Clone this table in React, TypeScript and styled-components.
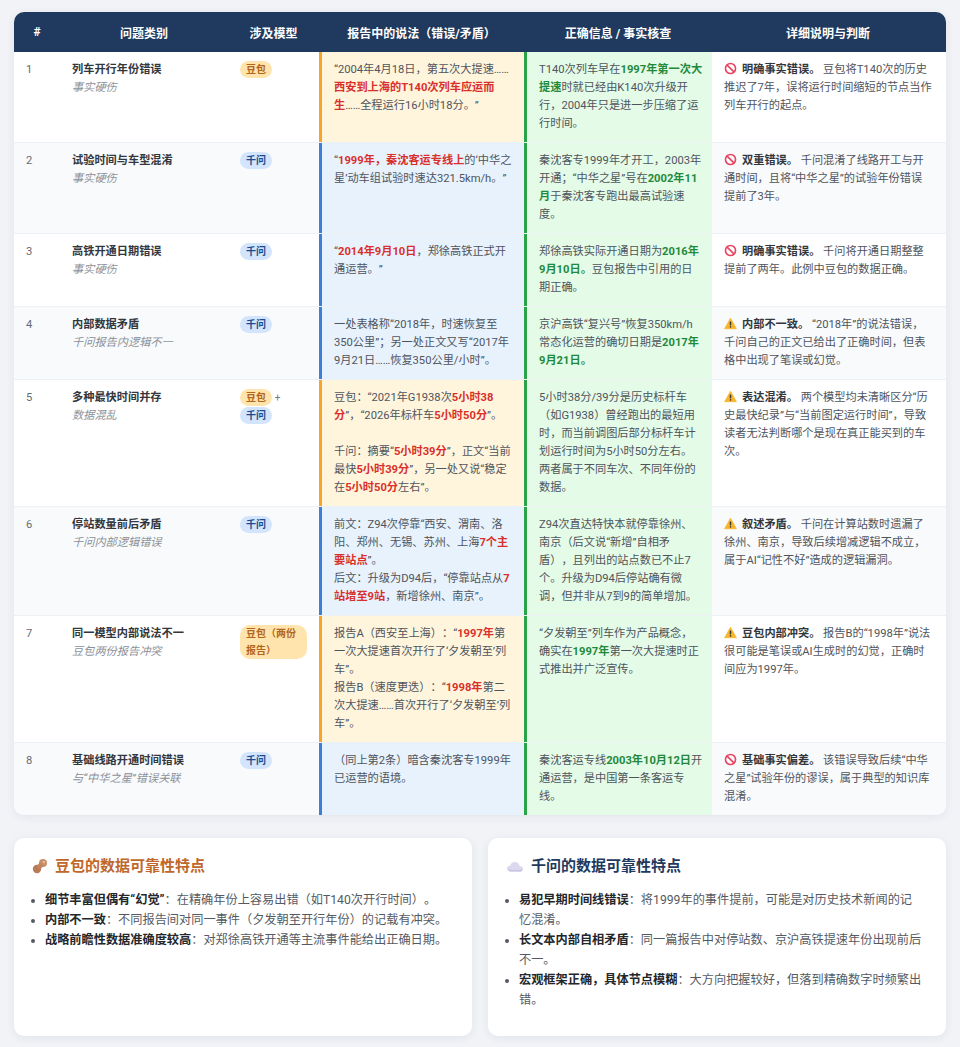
import React from 'react';
import styled, { createGlobalStyle } from 'styled-components';

const GlobalStyle = createGlobalStyle`
  body {
    margin: 0;
    background: #f1f3f7;
    font-family: Roboto, "Noto Sans CJK SC", sans-serif;
    color: #4a4f57;
    text-spacing-trim: space-all;
  }
`;

const COLS = '46px 168px 91px 205px 188px 232px';

const Page = styled.div`
  padding: 12px 14px 10px;
`;

const TableCard = styled.div`
  background: #fff;
  border-radius: 10px;
  overflow: hidden;
  box-shadow: 0 2px 10px rgba(30, 45, 70, 0.07);
`;

const HeadRow = styled.div`
  display: grid;
  grid-template-columns: ${COLS};
  height: 40px;
  align-items: center;
  background: #1f3a5e;
  color: #fff;
  font-size: 12px;
  font-weight: 700;
  text-align: center;
`;

const Row = styled.div<{ $alt: boolean; $last: boolean }>`
  display: grid;
  grid-template-columns: ${COLS};
  background: ${p => (p.$alt ? '#f8fafc' : '#fff')};
  border-bottom: ${p => (p.$last ? 'none' : '1px solid #edf0f4')};
`;

const Cell = styled.div`
  padding: 9px 12px;
  font-size: 11.2px;
  line-height: 18px;
  color: #4f545c;
`;

const NumCell = styled(Cell)`
  color: #666b73;
`;

const CatTitle = styled.div`
  font-weight: 700;
  color: #33373d;
`;

const CatSub = styled.div`
  font-style: italic;
  color: #8c9199;
`;

const ReportCell = styled(Cell)<{ $model: 'doubao' | 'qianwen' }>`
  background: ${p => (p.$model === 'doubao' ? '#fff5dd' : '#e7f2fd')};
  border-left: 3px solid ${p => (p.$model === 'doubao' ? '#f5a52a' : '#3d7fd6')};
`;

const CheckCell = styled(Cell)`
  padding-right: 9.5px;
  background: #e4fbe8;
  border-left: 3px solid #2ba448;
`;

const Badge = styled.span<{ $model: 'doubao' | 'qianwen' }>`
  display: inline-block;
  padding: 0 6px;
  border-radius: 10px;
  font-size: 10px;
  font-weight: 700;
  line-height: 17px;
  background: ${p => (p.$model === 'doubao' ? '#ffe5ad' : '#d3e5fc')};
  color: ${p => (p.$model === 'doubao' ? '#b2651c' : '#1d4a8f')};
`;

const Plus = styled.span`
  color: #777;
  font-size: 10px;
`;

const Red = styled.b`
  color: #d9302b;
`;

const Green = styled.b`
  color: #1f8a3b;
`;

const Label = styled.b`
  color: #33373d;
`;

const IconSvg = styled.svg`
  width: 13px;
  height: 13px;
  vertical-align: -2px;
  margin-right: 5px;
`;

const Cards = styled.div`
  display: grid;
  grid-template-columns: 1fr 1fr;
  gap: 16px;
  margin-top: 23px;
`;

const InfoCard = styled.div`
  background: #fff;
  border-radius: 10px;
  padding: 18px 22px 26px 18px;
  box-shadow: 0 2px 10px rgba(30, 45, 70, 0.07);
`;

const CardTitle = styled.h3<{ $color: string }>`
  display: flex;
  align-items: center;
  gap: 7px;
  margin: 0 0 14px;
  font-size: 15px;
  line-height: 20px;
  font-weight: 700;
  color: ${p => p.$color};
`;

const List = styled.ul`
  margin: 0;
  padding-left: 13px;
`;

const Item = styled.li`
  font-size: 12.2px;
  line-height: 20px;
  color: #555a62;

  strong {
    color: #23262b;
  }
`;

const ErrorIcon = () => (
  <IconSvg viewBox="0 0 16 16">
    <circle cx="8" cy="8" r="6.2" fill="none" stroke="#ea4560" strokeWidth="2" />
    <line x1="3.8" y1="3.8" x2="12.2" y2="12.2" stroke="#ea4560" strokeWidth="2" />
  </IconSvg>
);

const WarnIcon = () => (
  <IconSvg viewBox="0 0 16 16">
    <path d="M8 1.6 L15.2 14.4 H0.8 Z" fill="#f7b52c" stroke="#f7b52c" strokeWidth="1" strokeLinejoin="round" />
    <rect x="7.1" y="5.4" width="1.8" height="5" rx="0.8" fill="#3a3a3a" />
    <circle cx="8" cy="12.2" r="1" fill="#3a3a3a" />
  </IconSvg>
);

const PeanutIcon = () => (
  <svg width="16" height="16" viewBox="0 0 16 16">
    <circle cx="11" cy="5" r="4" fill="#c98f68" />
    <circle cx="5" cy="11" r="4.2" fill="#b97b55" />
    <rect x="5.5" y="5.5" width="5" height="5" transform="rotate(45 8 8)" fill="#c08460" />
    <circle cx="12" cy="4" r="1.3" fill="#e2b99b" />
  </svg>
);

const CloudIcon = () => (
  <svg width="18" height="14" viewBox="0 0 18 14">
    <path d="M4.5 12.5 C1.8 12.5 1 10.8 1 9.6 C1 7.8 2.5 6.6 4.2 6.8 C4.8 4.2 6.8 3 8.9 3 C11.6 3 13.3 4.8 13.6 6.9 C15.6 6.9 17 8.2 17 9.8 C17 11.4 15.7 12.5 14 12.5 Z" fill="#dcd8ee" />
    <path d="M4.5 12.5 C3 12.5 2 11.5 2 10.2 C4 11.4 12 11.6 16.6 10.2 C16.4 11.6 15.4 12.5 14 12.5 Z" fill="#c5c0e0" />
  </svg>
);

type Model = 'doubao' | 'qianwen';

interface IssueRow {
  title: string;
  sub: string;
  models: React.ReactNode;
  report: Model;
  claim: React.ReactNode;
  check: React.ReactNode;
  kind: 'error' | 'warn';
  label: string;
  detail: string;
}

const rows: IssueRow[] = [
  {
    title: '列车开行年份错误',
    sub: '事实硬伤',
    models: <Badge $model="doubao">豆包</Badge>,
    report: 'doubao',
    claim: <>“2004年4月18日，第五次大提速……<Red>西安到上海的T140次列车应运而生</Red>……全程运行16小时18分。”</>,
    check: <>T140次列车早在<Green>1997年第一次大提速</Green>时就已经由K140次升级开行，2004年只是进一步压缩了运行时间。</>,
    kind: 'error',
    label: '明确事实错误。',
    detail: '豆包将T140次的历史推迟了7年，误将运行时间缩短的节点当作列车开行的起点。',
  },
  {
    title: '试验时间与车型混淆',
    sub: '事实硬伤',
    models: <Badge $model="qianwen">千问</Badge>,
    report: 'qianwen',
    claim: <>“<Red>1999年，秦沈客运专线上</Red>的‘中华之星’动车组试验时速达321.5km/h。”</>,
    check: <>秦沈客专1999年才开工，2003年开通；“中华之星”号在<Green>2002年11月</Green>于秦沈客专跑出最高试验速度。</>,
    kind: 'error',
    label: '双重错误。',
    detail: '千问混淆了线路开工与开通时间，且将“中华之星”的试验年份错误提前了3年。',
  },
  {
    title: '高铁开通日期错误',
    sub: '事实硬伤',
    models: <Badge $model="qianwen">千问</Badge>,
    report: 'qianwen',
    claim: <>“<Red>2014年9月10日</Red>，郑徐高铁正式开通运营。”</>,
    check: <>郑徐高铁实际开通日期为<Green>2016年9月10日。</Green>豆包报告中引用的日期正确。</>,
    kind: 'error',
    label: '明确事实错误。',
    detail: '千问将开通日期整整提前了两年。此例中豆包的数据正确。',
  },
  {
    title: '内部数据矛盾',
    sub: '千问报告内逻辑不一',
    models: <Badge $model="qianwen">千问</Badge>,
    report: 'qianwen',
    claim: <>一处表格称“2018年，时速恢复至350公里”；另一处正文又写“2017年9月21日……恢复350公里/小时”。</>,
    check: <>京沪高铁“复兴号”恢复350km/h常态化运营的确切日期是<Green>2017年9月21日。</Green></>,
    kind: 'warn',
    label: '内部不一致。',
    detail: '“2018年”的说法错误，千问自己的正文已给出了正确时间，但表格中出现了笔误或幻觉。',
  },
  {
    title: '多种最快时间并存',
    sub: '数据混乱',
    models: <><Badge $model="doubao">豆包</Badge> <Plus>+</Plus> <Badge $model="qianwen">千问</Badge></>,
    report: 'doubao',
    claim: (
      <>
        豆包：“2021年G1938次<Red>5小时38分</Red>”，“2026年标杆车<Red>5小时50分</Red>”。
        <br />
        <br />
        千问：摘要“<Red>5小时39分</Red>”，正文“当前最快<Red>5小时39分</Red>”，另一处又说“稳定在<Red>5小时50分</Red>左右”。
      </>
    ),
    check: <>5小时38分/39分是历史标杆车（如G1938）曾经跑出的最短用时，而当前调图后部分标杆车计划运行时间为5小时50分左右。两者属于不同车次、不同年份的数据。</>,
    kind: 'warn',
    label: '表达混淆。',
    detail: '两个模型均未清晰区分“历史最快纪录”与“当前图定运行时间”，导致读者无法判断哪个是现在真正能买到的车次。',
  },
  {
    title: '停站数量前后矛盾',
    sub: '千问内部逻辑错误',
    models: <Badge $model="qianwen">千问</Badge>,
    report: 'qianwen',
    claim: (
      <>
        前文：Z94次停靠“西安、渭南、洛阳、郑州、无锡、苏州、上海<Red>7个主要站点</Red>”。
        <br />
        后文：升级为D94后，“停靠站点从<Red>7站增至9站</Red>，新增徐州、南京”。
      </>
    ),
    check: <>Z94次直达特快本就停靠徐州、南京（后文说“新增”自相矛盾），且列出的站点数已不止7个。升级为D94后停站确有微调，但并非从7到9的简单增加。</>,
    kind: 'warn',
    label: '叙述矛盾。',
    detail: '千问在计算站数时遗漏了徐州、南京，导致后续增减逻辑不成立，属于AI“记性不好”造成的逻辑漏洞。',
  },
  {
    title: '同一模型内部说法不一',
    sub: '豆包两份报告冲突',
    models: <Badge $model="doubao">豆包（两份报告）</Badge>,
    report: 'doubao',
    claim: (
      <>
        报告A（西安至上海）：“<Red>1997年</Red>第一次大提速首次开行了‘夕发朝至’列车”。
        <br />
        报告B（速度更迭）：“<Red>1998年</Red>第二次大提速……首次开行了‘夕发朝至’列车”。
      </>
    ),
    check: <>“夕发朝至”列车作为产品概念，确实在<Green>1997年</Green>第一次大提速时正式推出并广泛宣传。</>,
    kind: 'warn',
    label: '豆包内部冲突。',
    detail: '报告B的“1998年”说法很可能是笔误或AI生成时的幻觉，正确时间应为1997年。',
  },
  {
    title: '基础线路开通时间错误',
    sub: '与“中华之星”错误关联',
    models: <Badge $model="qianwen">千问</Badge>,
    report: 'qianwen',
    claim: <>（同上第2条）暗含秦沈客专1999年已运营的语境。</>,
    check: <>秦沈客运专线<Green>2003年10月12日</Green>开通运营，是中国第一条客运专线。</>,
    kind: 'error',
    label: '基础事实偏差。',
    detail: '该错误导致后续“中华之星”试验年份的谬误，属于典型的知识库混淆。',
  },
];

const headers = ['#', '问题类别', '涉及模型', '报告中的说法（错误/矛盾）', '正确信息 / 事实核查', '详细说明与判断'];

const App = () => {
  return (
    <Page>
      <GlobalStyle />
      <TableCard>
        <HeadRow>
          {headers.map(h => <div key={h}>{h}</div>)}
        </HeadRow>
        {rows.map((r, i) => (
          <Row key={r.title} $alt={i % 2 === 1} $last={i === rows.length - 1}>
            <NumCell>{i + 1}</NumCell>
            <Cell>
              <CatTitle>{r.title}</CatTitle>
              <CatSub>{r.sub}</CatSub>
            </Cell>
            <Cell>{r.models}</Cell>
            <ReportCell $model={r.report}>{r.claim}</ReportCell>
            <CheckCell>{r.check}</CheckCell>
            <Cell>
              {r.kind === 'error' ? <ErrorIcon /> : <WarnIcon />}
              <Label>{r.label}</Label> {r.detail}
            </Cell>
          </Row>
        ))}
      </TableCard>

      <Cards>
        <InfoCard>
          <CardTitle $color="#c0672a"><PeanutIcon />豆包的数据可靠性特点</CardTitle>
          <List>
            <Item><strong>细节丰富但偶有“幻觉”</strong>：在精确年份上容易出错（如T140次开行时间）。</Item>
            <Item><strong>内部不一致</strong>：不同报告间对同一事件（夕发朝至开行年份）的记载有冲突。</Item>
            <Item><strong>战略前瞻性数据准确度较高</strong>：对郑徐高铁开通等主流事件能给出正确日期。</Item>
          </List>
        </InfoCard>
        <InfoCard>
          <CardTitle $color="#1f3a5e"><CloudIcon />千问的数据可靠性特点</CardTitle>
          <List>
            <Item><strong>易犯早期时间线错误</strong>：将1999年的事件提前，可能是对历史技术新闻的记忆混淆。</Item>
            <Item><strong>长文本内部自相矛盾</strong>：同一篇报告中对停站数、京沪高铁提速年份出现前后不一。</Item>
            <Item><strong>宏观框架正确，具体节点模糊</strong>：大方向把握较好，但落到精确数字时频繁出错。</Item>
          </List>
        </InfoCard>
      </Cards>
    </Page>
  );
};

export default App;
